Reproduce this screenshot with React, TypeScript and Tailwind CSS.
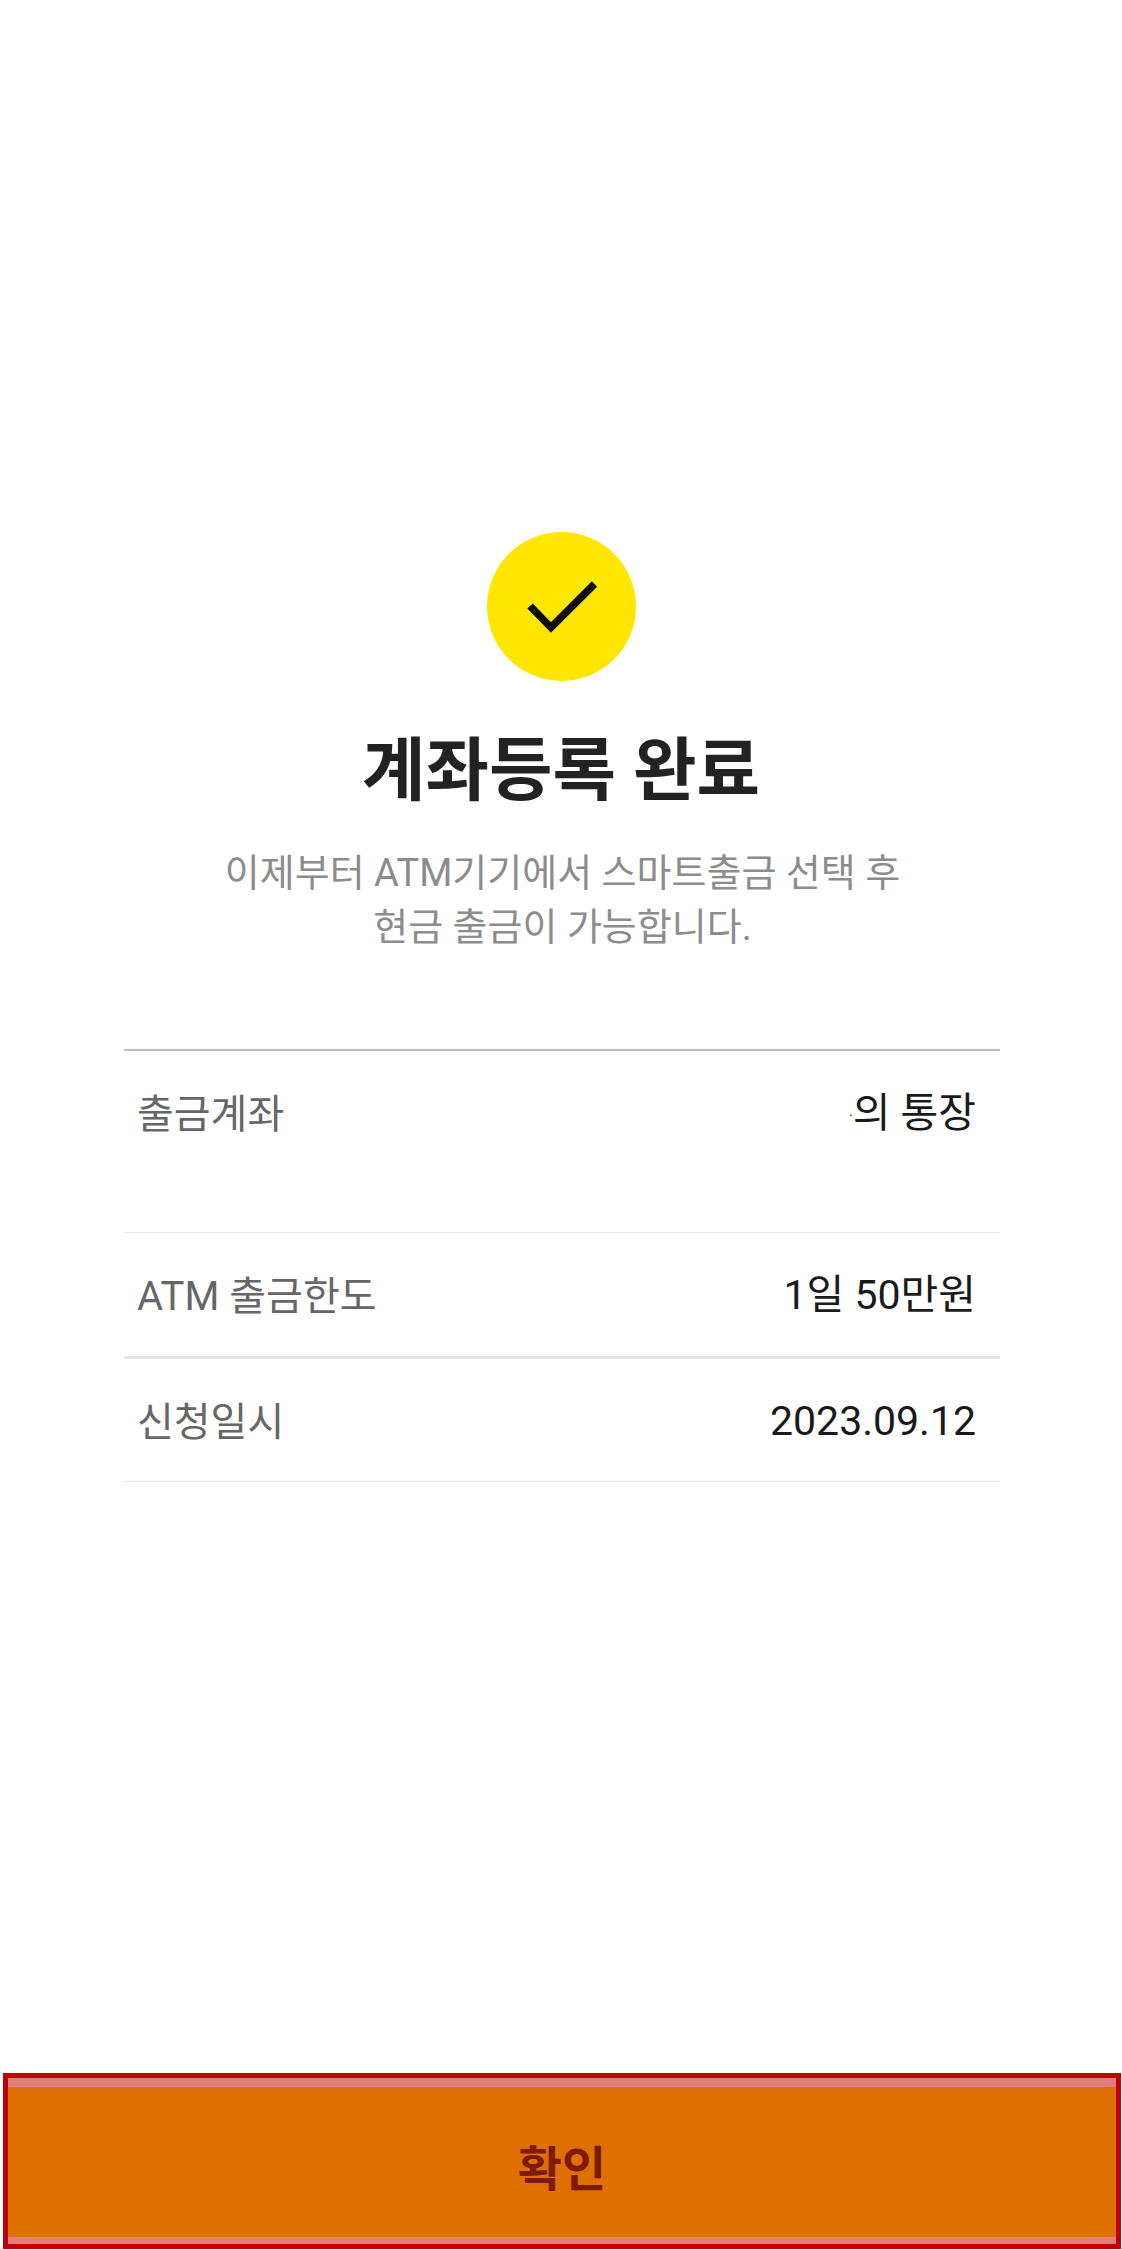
import React from "react";

const rows = [
  { label: "출금계좌", value: "의 통장", height: "h-[182px]", border: "border-b border-[#e8e8e8]", dot: true },
  { label: "ATM 출금한도", value: "1일 50만원", height: "h-[126px]", border: "border-b-[3px] border-[#e6e6e8]", dot: false },
  { label: "신청일시", value: "2023.09.12", height: "h-[123px]", border: "border-b border-[#e8e8e8]", dot: false },
];

const App: React.FC = () => {
  return (
    <div className="w-[1122px] h-[2250px] flex flex-col bg-white font-['Roboto','Noto_Sans_CJK_KR',sans-serif]">
      {/* Content */}
      <main className="flex-1 flex flex-col items-center pt-[532px]">
        <div className="w-[149px] h-[149px] rounded-full bg-[#ffe600]">
          <svg width="149" height="149" viewBox="0 0 149 149" fill="none">
            <path d="M43 74 L64 95.5 L107.5 52" stroke="#0c0c04" strokeWidth="7.5" />
          </svg>
        </div>
        <h1 className="mt-[51px] text-[69px] leading-[80px] font-bold text-[#222222]">계좌등록 완료</h1>
        <p className="mt-[34px] pl-[3px] text-center text-[38px] leading-[54px] text-[#8c8c8c]">
          이제부터 ATM기기에서 스마트출금 선택 후
          <br />
          현금 출금이 가능합니다.
        </p>

        <div className="mt-[95px] ml-[2px] w-[876px] border-t-2 border-[#bcbcbc]">
          {rows.map((row) => (
            <div key={row.label} className={`flex justify-between pl-[13px] pr-[24px] pt-[38px] ${row.height} ${row.border}`}>
              <span className="text-[40px] leading-[52px] text-[#666666]">{row.label}</span>
              <span className="text-[41px] leading-[48px] text-[#1a1a1a]">
                {row.dot && <span className="text-[14px] align-middle">·</span>}
                {row.value}
              </span>
            </div>
          ))}
        </div>
      </main>

      {/* Bottom button */}
      <div className="pl-[3px] pr-[1px] pb-[1px]">
        <div className="h-[176px] border-[5px] border-[#c00000] bg-[#e07d7d] pt-[9px] pb-[7px]">
          <button className="w-full h-full pt-[16px] bg-[#de7000] text-[#7f1a0a] text-[48px] font-semibold">확인</button>
        </div>
      </div>
    </div>
  );
};

export default App;
